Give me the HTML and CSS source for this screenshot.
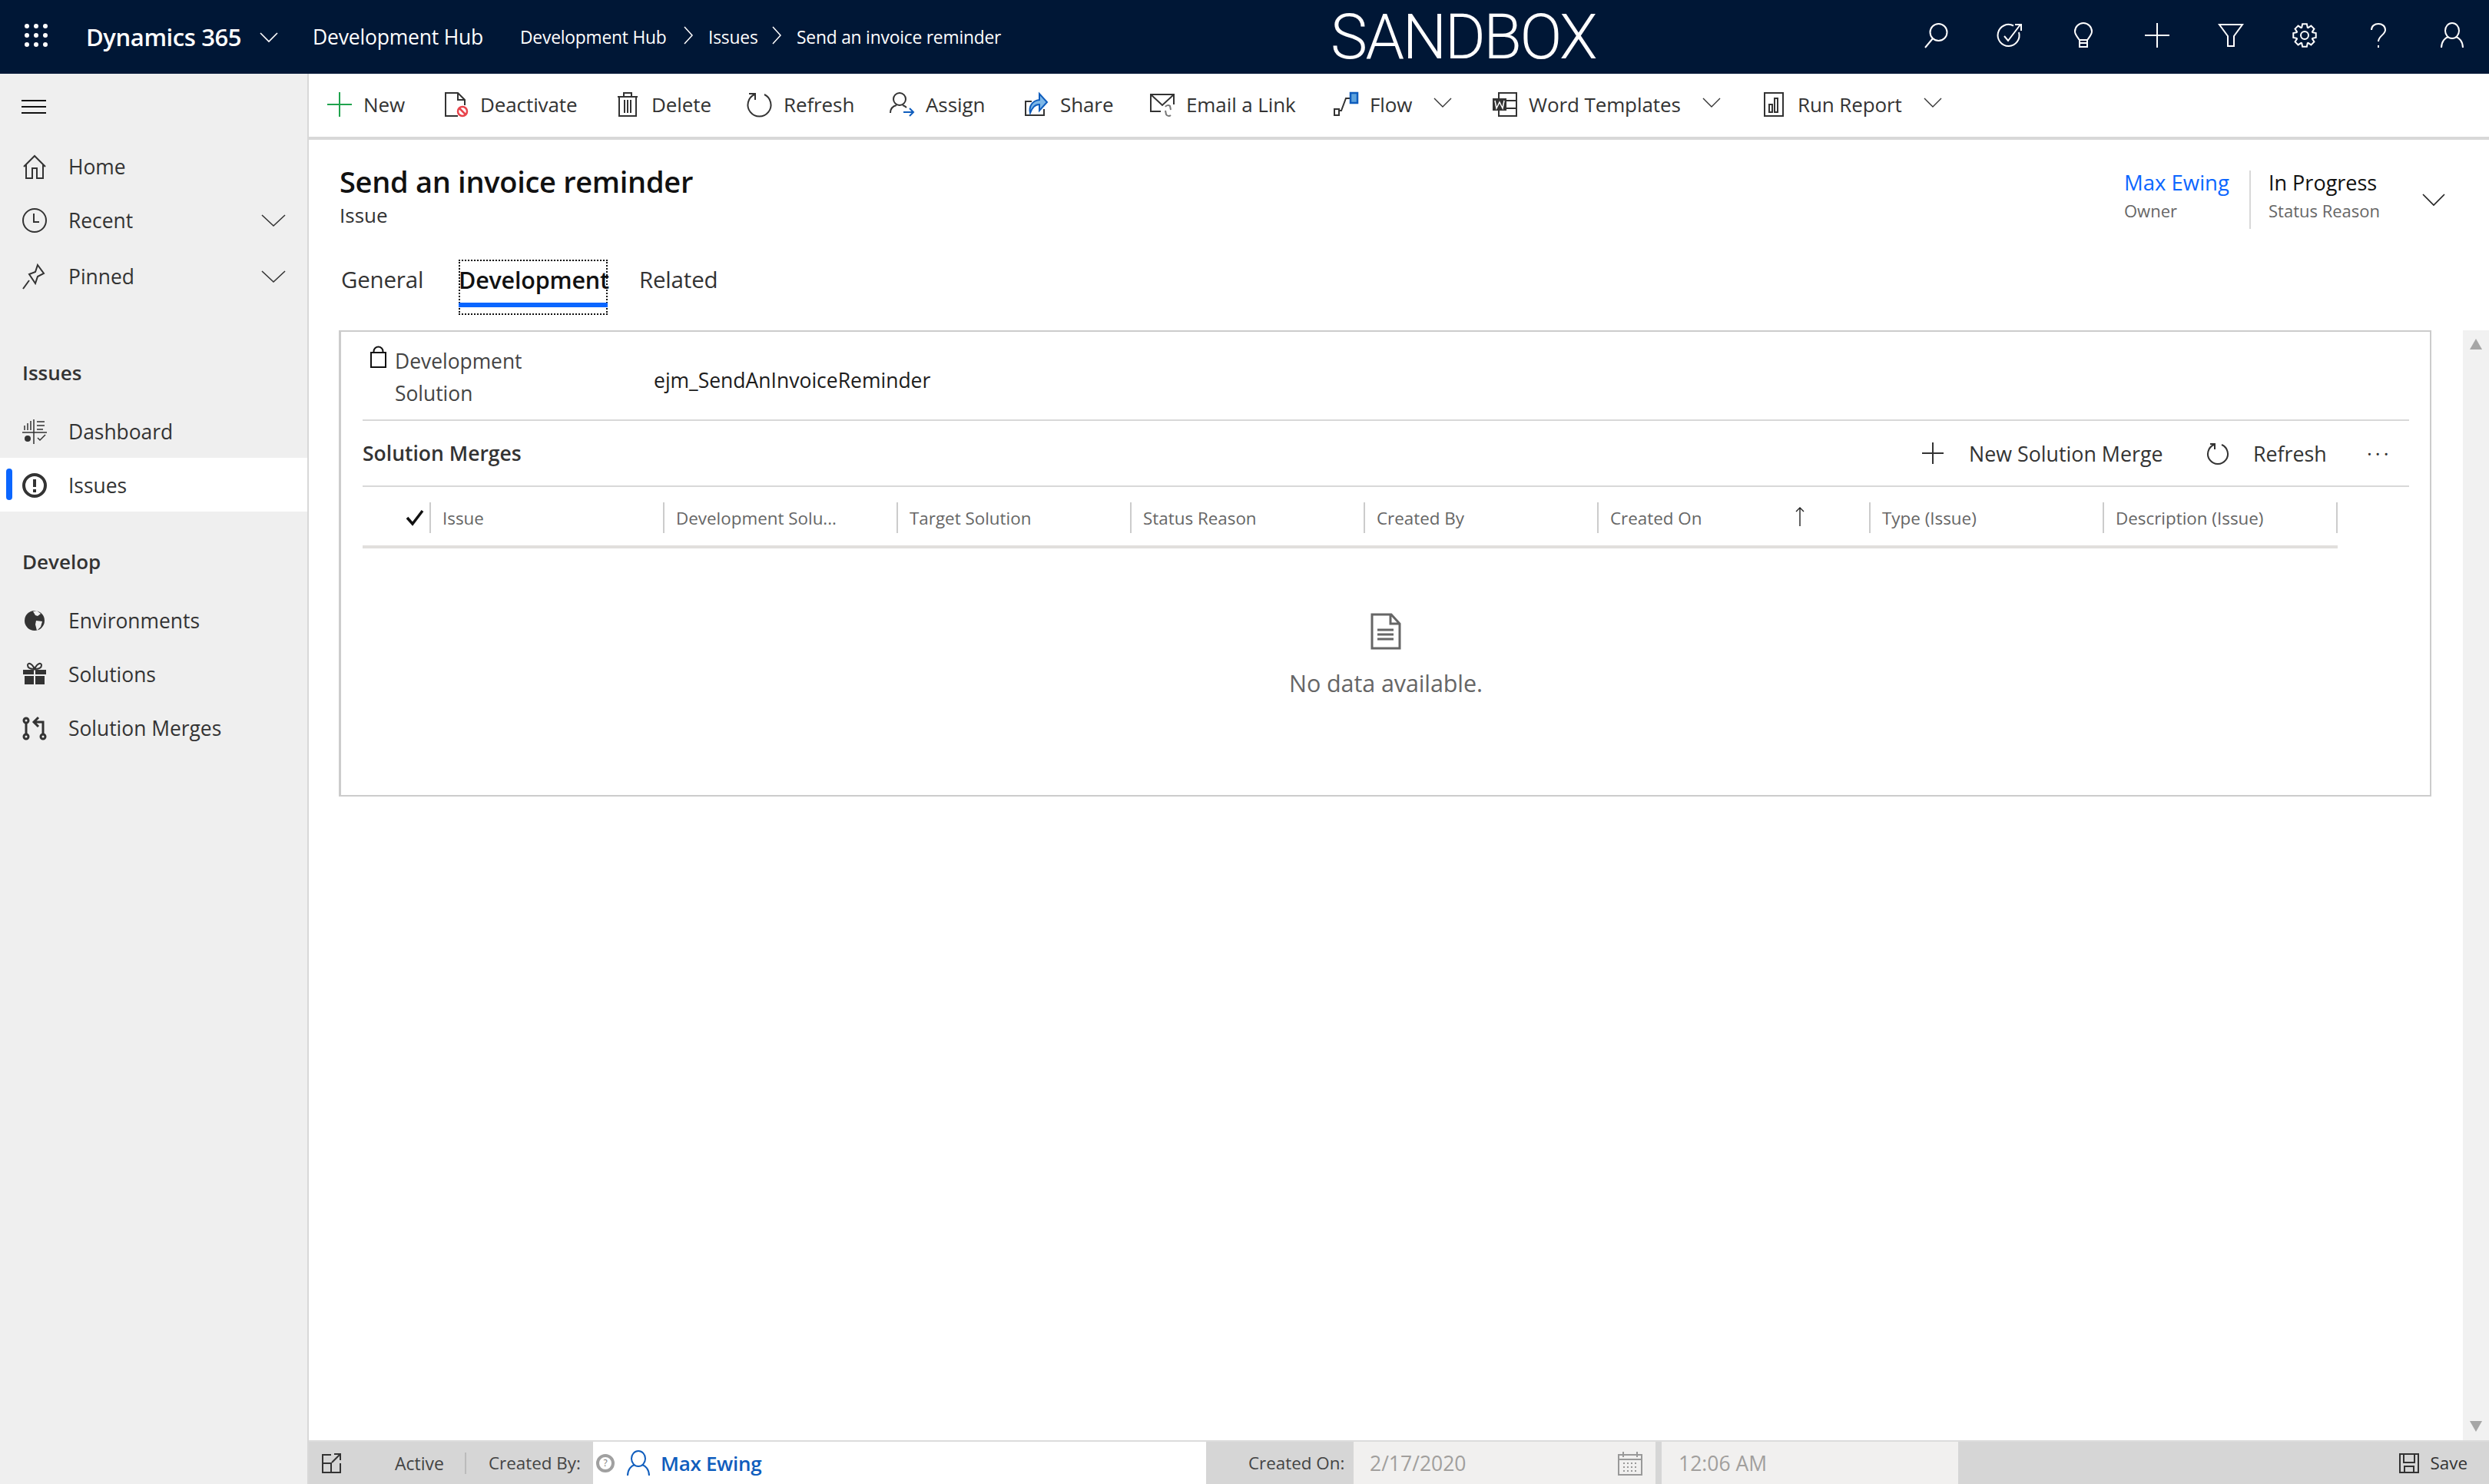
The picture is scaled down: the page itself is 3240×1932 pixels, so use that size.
FILE: index.html
```html
<!DOCTYPE html>
<html lang="en">
<head>
<meta charset="utf-8">
<title>Send an invoice reminder</title>
<link rel="stylesheet" href="styles.css">
</head>
<body>
<header class="topbar">
  <div class="topbar-left">
    <svg class="waffle" viewBox="0 0 30 30"><g class="solid"><circle cx="3" cy="3" r="3"/><circle cx="15" cy="3" r="3"/><circle cx="27" cy="3" r="3"/><circle cx="3" cy="15" r="3"/><circle cx="15" cy="15" r="3"/><circle cx="27" cy="15" r="3"/><circle cx="3" cy="27" r="3"/><circle cx="15" cy="27" r="3"/><circle cx="27" cy="27" r="3"/></g></svg>
    <span class="brand">Dynamics 365</span>
    <svg class="chev chev-top" viewBox="0 0 24 13"><path d="M1 1l11 11L23 1"/></svg>
    <span class="app-name">Development Hub</span>
    <span class="crumb crumb-hub">Development Hub</span>
    <svg class="crumb-sep" viewBox="0 0 12 24"><path d="M1 1l10 11L1 23"/></svg>
    <span class="crumb crumb-issues">Issues</span>
    <svg class="crumb-sep" viewBox="0 0 12 24"><path d="M1 1l10 11L1 23"/></svg>
    <span class="crumb">Send an invoice reminder</span>
  </div>
  <div class="sandbox">SANDBOX</div>
  <nav class="top-icons">
    <span class="top-icon"><svg class="ic32" viewBox="0 0 32 32"><circle cx="19.500" cy="12" r="11"/><path d="M12 20L2 32"/></svg></span>
    <span class="top-icon"><svg class="ic32" viewBox="0 0 32 32"><path d="M21 3.500A14 14 0 1 0 28 12"/><path d="M9 17l5 6L30 2M23 2h8v8"/></svg></span>
    <span class="top-icon"><svg class="ic32" viewBox="0 0 32 32"><path d="M11 22C8 18 5 15 5 11a11 11 0 0 1 22 0c0 4-3 7-6 11zM11 22v9h10v-9M11 26h10"/></svg></span>
    <span class="top-icon"><svg class="ic32" viewBox="0 0 32 32"><path d="M16 0v32M0 16h32"/></svg></span>
    <span class="top-icon"><svg class="ic32" viewBox="0 0 32 32"><path d="M1 2h30L20 17v13h-8V17z"/></svg></span>
    <span class="top-icon"><svg class="ic32" viewBox="-16 -16 32 32"><polygon points="-2.86,-14.72 2.86,-14.72 3.76,-10.34 4.65,-9.97 8.39,-12.44 12.44,-8.39 9.97,-4.65 10.34,-3.76 14.72,-2.86 14.72,2.86 10.34,3.76 9.97,4.65 12.44,8.39 8.39,12.44 4.65,9.97 3.76,10.34 2.86,14.72 -2.86,14.72 -3.76,10.34 -4.65,9.97 -8.39,12.44 -12.44,8.39 -9.97,4.65 -10.34,3.76 -14.72,2.86 -14.72,-2.86 -10.34,-3.76 -9.97,-4.65 -12.44,-8.39 -8.39,-12.44 -4.65,-9.97 -3.76,-10.34"/><circle r="5"/></svg></span>
    <span class="top-icon"><svg class="ic32" viewBox="0 0 32 32"><path d="M7 9c0-5 4-8 9-8s9 3 9 8c0 6-9 8-9 15"/><path d="M16 29v3"/></svg></span>
    <span class="top-icon"><svg class="ic32" viewBox="0 0 32 32"><ellipse cx="16" cy="10" rx="9" ry="10"/><path d="M2 32c0-8 5-13 9-14M30 32c0-8-5-13-9-14"/></svg></span>
  </nav>
</header>

<div class="shell">
  <aside class="sidebar">
    <div class="burger"><svg class="burger-ic" viewBox="0 0 32 18"><path d="M0 1h32M0 9h32M0 17h32"/></svg></div>
    <ul class="nav-list nav-top">
      <li class="nav-row"><svg class="ic-nav" viewBox="0 0 30 32"><path d="M1 16L15 2l14 14M4 13v18h8V18h6v13h8V13"/></svg><span>Home</span></li>
      <li class="nav-row"><svg class="ic-nav" viewBox="0 0 32 32"><circle cx="16" cy="16" r="15"/><path d="M15 7v11h7"/></svg><span>Recent</span><svg class="chev chev-nav" viewBox="0 0 32 16"><path d="M1 1l15 14L31 1"/></svg></li>
      <li class="nav-row"><svg class="ic-nav" viewBox="0 0 32 32"><path d="M20 1l8 11-8 4-3 9-8-12 8-3zM9 21L1 32"/></svg><span>Pinned</span><svg class="chev chev-nav" viewBox="0 0 32 16"><path d="M1 1l15 14L31 1"/></svg></li>
    </ul>
    <h2 class="nav-heading nav-heading-issues">Issues</h2>
    <ul class="nav-list nav-list-issues">
      <li class="nav-row"><svg class="ic-nav ic-thin" viewBox="0 0 32 32"><path d="M0 17h32M15 0v32M3 8v6M7 5v9M11 2v12M19 3h10M19 8h10M19 13h8M20 24l3 3 7-7"/><circle class="solid" cx="7" cy="25" r="4"/></svg><span>Dashboard</span></li>
      <li class="nav-row nav-row-active"><svg class="ic-nav ic-bold" viewBox="0 0 32 32"><circle cx="16" cy="16" r="14"/><path d="M16 8v10M16 21v4"/></svg><span>Issues</span></li>
    </ul>
    <h2 class="nav-heading nav-heading-develop">Develop</h2>
    <ul class="nav-list">
      <li class="nav-row"><svg class="ic-nav" viewBox="0 0 32 32"><circle class="solid" cx="16" cy="16" r="13"/><path class="cut" d="M14 4l5-1 5 4-4 3-3-1zM18 16l8 1-2 7-5 5-2-8z"/></svg><span>Environments</span></li>
      <li class="nav-row"><svg class="ic-nav" viewBox="0 0 32 32"><g class="solid"><path d="M1 10h14v6H1zM17 10h14v6H17zM3 18h12v11H3zM17 18h12v11H17z"/></g><path d="M16 9c-6 0-9-2-9-5s5-4 9 5c4-9 9-8 9-5s-3 5-9 5z"/></svg><span>Solutions</span></li>
      <li class="nav-row"><svg class="ic-nav ic-merge" viewBox="0 0 32 32"><circle cx="5" cy="6" r="3"/><circle cx="5" cy="27" r="3"/><circle cx="27" cy="27" r="3"/><path d="M5 9v15M27 24V8H16M21 2l-6 6 6 6"/></svg><span>Solution Merges</span></li>
    </ul>
  </aside>

  <main class="main">
    <div class="toolbar">
      <div class="tool tool-new"><svg class="ic32 ic-green" viewBox="0 0 32 32"><path d="M16 0v32M0 16h32"/></svg><span>New</span></div>
      <div class="tool tool-deactivate"><svg class="ic32" viewBox="0 0 32 32"><path d="M18 31H2V1h16l9 9v7M18 1v9h9"/><circle class="ic-red" cx="24" cy="25" r="6"/><path class="ic-red" d="M20 21l8 8"/></svg><span>Deactivate</span></div>
      <div class="tool tool-delete"><svg class="ic32" viewBox="0 0 28 32"><path d="M1 6h26M9 6V1h10v5M3 6v25h22V6M10 10v17M14 10v17M18 10v17"/></svg><span>Delete</span></div>
      <div class="tool tool-refresh"><svg class="ic32" viewBox="0 0 32 32"><path d="M9 3a15 15 0 1 0 13 0M2 2h8v8"/></svg><span>Refresh</span></div>
      <div class="tool tool-assign"><svg class="ic32" viewBox="0 0 32 32"><ellipse cx="13" cy="9" rx="8" ry="8"/><path d="M1 27c0-6 4-9 8-10M17 17c2 .5 4 2 5 3"/><path class="ic-blue" d="M18 26h13M26 21l5 5-5 5"/></svg><span>Assign</span></div>
      <div class="tool tool-share"><svg class="ic32" viewBox="0 0 32 32"><path d="M10 12H2v18h24v-8"/><path class="ic-share" d="M8 27c-2-9 3-16 12-17V2l10 11-10 11v-8c-6 0-9 4-12 11z"/></svg><span>Share</span></div>
      <div class="tool tool-email"><svg class="ic32" viewBox="0 0 32 32"><path d="M14 25H1V3h30v13M1 3l15 14L31 3"/><path class="ic-gray" d="M20 19a4 4 0 0 1 6-1l1 5M27 30a4 4 0 0 1-6-1l-1-5"/></svg><span>Email a Link</span></div>
      <div class="tool tool-flow"><svg class="ic32" viewBox="0 0 32 32"><path d="M1 22h6v8H1zM7 24h3l6-16h7"/><rect class="ic-fill-blue" x="22" y="1" width="9" height="13"/></svg><span>Flow</span><svg class="chev chev-tool" viewBox="0 0 24 13"><path d="M1 1l11 11L23 1"/></svg></div>
      <div class="tool tool-word"><svg class="ic32" viewBox="0 0 32 32"><path d="M8 1h23v30H8zM8 11h23M8 21h23"/><rect class="solid" x="0" y="8" width="18" height="16"/><path class="cut-line" d="M3 11l2 10 4-8 4 8 2-10"/></svg><span>Word Templates</span><svg class="chev chev-tool" viewBox="0 0 24 13"><path d="M1 1l11 11L23 1"/></svg></div>
      <div class="tool tool-report"><svg class="ic-report" viewBox="0 0 28 32"><path d="M2 1h24v30H2zM8 16h4v10H8zM15 8h4v18h-4z"/></svg><span>Run Report</span><svg class="chev chev-tool" viewBox="0 0 24 13"><path d="M1 1l11 11L23 1"/></svg></div>
    </div>

    <section class="record-head">
      <div class="record-title-row">
        <div>
          <h1 class="record-title">Send an invoice reminder</h1>
          <div class="record-type">Issue</div>
        </div>
        <div class="record-meta">
          <div class="meta-owner"><div class="meta-link">Max Ewing</div><div class="meta-label">Owner</div></div>
          <div class="meta-status"><div class="meta-value">In Progress</div><div class="meta-label">Status Reason</div></div>
          <svg class="chev chev-meta" viewBox="0 0 30 16"><path d="M1 1l14 14L29 1"/></svg>
        </div>
      </div>
      <div class="tabs">
        <span class="tab tab-general">General</span>
        <span class="tab tab-active">Development</span>
        <span class="tab">Related</span>
      </div>
    </section>

    <div class="pane">
      <div class="pane-body">
        <section class="card">
          <div class="field-row">
            <div class="field-label">
              <svg class="lock" viewBox="0 0 21 28"><path d="M1 8h19v19H1zM4.500 8V6.500a6 6 0 0 1 12 0V8"/></svg>
              <span class="field-label-text">Development Solution</span>
            </div>
            <div class="field-value">ejm_SendAnInvoiceReminder</div>
          </div>
          <div class="grid-bar">
            <h2 class="grid-title">Solution Merges</h2>
            <div class="grid-actions">
              <div class="grid-action grid-action-new"><svg class="ic28" viewBox="0 0 28 28"><path d="M14 0v28M0 14h28"/></svg><span>New Solution Merge</span></div>
              <div class="grid-action grid-action-refresh"><svg class="ic28" viewBox="0 0 28 28"><path d="M9 3a13 13 0 1 0 10 0M4 2h6v7"/></svg><span>Refresh</span></div>
              <div class="grid-more">···</div>
            </div>
          </div>
          <div class="grid-head">
            <div class="col col-check"><svg class="check" viewBox="0 0 22 20"><path d="M1 10l7 8L21 1"/></svg></div>
            <div class="col">Issue</div>
            <div class="col">Development Solu...</div>
            <div class="col">Target Solution</div>
            <div class="col">Status Reason</div>
            <div class="col">Created By</div>
            <div class="col col-sorted">Created On<svg class="sort" viewBox="0 0 12 25"><path d="M6 25V1M1 6l5-5 5 5"/></svg></div>
            <div class="col">Type (Issue)</div>
            <div class="col">Description (Issue)</div>
          </div>
          <div class="empty">
            <svg class="empty-ic" viewBox="0 0 40 48"><path d="M2 2h25l11 12v32H2zM26 2v12h12M9 22h21M9 28h21M9 34h21"/></svg>
            <div class="empty-text">No data available.</div>
          </div>
        </section>
      </div>
      <div class="scrollbar">
        <svg class="arrow" viewBox="0 0 16 14"><path d="M8 0l8 14H0z"/></svg>
        <svg class="arrow" viewBox="0 0 16 14"><path d="M0 0h16L8 14z"/></svg>
      </div>
    </div>

    <footer class="statusbar">
      <svg class="ic-expand" viewBox="0 0 26 26"><path d="M13 2H2v23h23V13M2 13h11v12M14 12L25 1M17 1h8v8"/></svg>
      <span class="status-active">Active</span>
      <span class="status-label status-created">Created By:</span>
      <div class="lookup">
        <span class="presence">?</span>
        <svg class="ic-user" viewBox="0 0 30 32"><ellipse cx="15" cy="10" rx="9" ry="10"/><path d="M1 32c0-8 5-13 9-14M29 32c0-8-5-13-9-14"/></svg>
        <span class="lookup-name">Max Ewing</span>
      </div>
      <span class="status-label status-on">Created On:</span>
      <div class="input input-date"><span>2/17/2020</span>
        <svg class="ic-cal" viewBox="0 0 32 32"><path d="M1 5h30v26H1zM1 11h30M7 1v7M25 1v7M7 16h2M12 16h2M17 16h2M22 16h2M7 21h2M12 21h2M17 21h2M22 21h2M7 26h2M12 26h2M17 26h2M22 26h2"/></svg>
      </div>
      <div class="input input-time"><span>12:06 AM</span></div>
      <div class="save"><svg class="ic-save" viewBox="0 0 26 26"><path d="M1 1h24v24H1zM6 1v11h14V1M7 25v-8h12v8"/></svg><span>Save</span></div>
    </footer>
  </main>
</div>
</body>
</html>
```

FILE: styles.css
```css
* { box-sizing: border-box; }
html, body { margin: 0; height: 100%; }
body {
  display: flex;
  flex-direction: column;
  width: 3240px;
  height: 1932px;
  overflow: hidden;
  font-family: "Open Sans", "Liberation Sans", sans-serif;
  font-size: 26px;
  color: #333;
  background: #fff;
}
h1, h2, ul { margin: 0; padding: 0; list-style: none; font: inherit; }
svg { display: block; flex: none; fill: none; stroke: currentColor; stroke-width: 2; overflow: visible; }
.solid { fill: currentColor; stroke: none; }
.ic32 { width: 32px; height: 32px; }
.ic28 { width: 28px; height: 28px; }

/* top bar */
.topbar {
  flex: none;
  display: flex;
  align-items: center;
  height: 96px;
  background: #001736;
  color: #fff;
}
.topbar-left { display: flex; align-items: center; width: 1732px; padding-left: 32px; white-space: nowrap; }
.waffle { width: 30px; height: 30px; margin-top: -4px; margin-right: 50px; }
.brand { width: 226px; font-size: 31px; font-weight: 600; letter-spacing: -.4px; }
.chev { stroke-width: 1.6px; }
.chev-top { width: 24px; height: 13px; margin-right: 45px; }
.app-name { width: 270px; font-size: 26.500px; letter-spacing: -.2px; }
.crumb { font-size: 22.800px; letter-spacing: -.2px; }
.crumb-hub { width: 213px; }
.crumb-issues { width: 83px; }
.crumb-sep { width: 12px; height: 24px; margin-right: 20px; margin-top: -4px; stroke-width: 1.5px; }
.sandbox { margin-top: 2px; font-family: Roboto, "Open Sans", sans-serif; font-size: 81px; font-weight: 300; line-height: 96px; letter-spacing: -2.500px; }
.top-icons { display: flex; margin-left: auto; margin-top: -4px; }
.top-icon { display: flex; justify-content: center; width: 96px; }

/* shell */
.shell { flex: 1; display: flex; min-height: 0; }
.sidebar { flex: none; width: 402px; background: #efefef; border-right: 2px solid #d8d8d8; }
.burger { display: flex; align-items: center; height: 84px; padding: 0 0 0 28px; margin-bottom: 2px; }
.burger-ic { width: 32px; height: 18px; margin-top: 2px; color: #111; }
.nav-top .nav-row:last-child { margin-top: 3px; }
.nav-row { position: relative; display: flex; align-items: center; height: 70px; padding-left: 29px; font-size: 26.400px; color: #333; }
.nav-row > span { margin-left: 28px; }
.nav-list-issues .nav-row { padding-top: 2px; }
.ic-nav { width: 32px; height: 32px; color: #333; }
.ic-thin { stroke-width: 1.5px; }
.ic-bold { stroke-width: 4px; }
.ic-merge { stroke-width: 3px; }
.cut { fill: #efefef; stroke: none; }
.chev-nav { position: absolute; right: 28px; top: 27px; width: 32px; height: 16px; }
.nav-row-active { background: #fff; }
.nav-row-active::before {
  content: "";
  position: absolute;
  left: 8px;
  top: 14px;
  width: 8px;
  height: 41px;
  border-radius: 4px;
  background: #0b66ff;
}
.nav-heading { display: flex; align-items: center; height: 70px; padding-left: 29px; font-weight: 600; color: #333; }
.nav-heading-issues { margin-top: 55px; margin-bottom: 6px; }
.nav-heading-develop { margin-top: 30px; margin-bottom: 7px; }

/* main */
.main { flex: 1; min-width: 0; display: flex; flex-direction: column; }
.toolbar {
  flex: none;
  display: grid;
  grid-template-columns: 152px 223px 172px 185px 175px 164px 239px 207px 352px 1fr;
  align-items: center;
  height: 86px;
  padding: 0 0 2px 24px;
  border-bottom: 4px solid #d8d8d8;
}
.tool { display: flex; align-items: center; white-space: nowrap; }
.tool > span { margin-left: 15px; letter-spacing: -.1px; }
.ic-green { color: #1fa34d; }
.ic-red { stroke: #e8434b; stroke-width: 2.500px; }
.ic-blue { stroke: #0f5dbd; }
.ic-gray { stroke: #777; }
.ic-share { fill: #7db7e8; stroke: #0f5dbd; }
.ic-fill-blue { fill: #5ea3de; stroke: #0f5dbd; stroke-width: 2.500px; }
.cut-line { stroke: #fff; stroke-width: 1.500px; }
.ic-report { width: 28px; height: 32px; }
.tool-report > span { margin-left: 17px; }
.chev-tool { width: 24px; height: 13px; margin-left: 28px; stroke-width: 1.4px; margin-top: -6px; }

.record-head { flex: none; height: 248px; padding: 27px 57px 0 40px; }
.record-title-row { display: flex; justify-content: space-between; }
.record-title { font-size: 38px; line-height: 54px; font-weight: 600; color: #111; letter-spacing: -.3px; }
.record-type { margin-top: 2px; font-size: 26px; line-height: 30px; color: #333; }
.record-meta { display: flex; align-items: flex-start; margin-top: 13px; }
.meta-owner { width: 163px; height: 76px; }
.meta-status { width: 225px; height: 76px; padding-left: 23px; border-left: 2px solid #d8d8d8; }
.meta-link, .meta-value { margin-top: -2px; line-height: 36px; white-space: nowrap; }
.meta-link { font-size: 27.500px; color: #0b66ff; }
.meta-value { font-size: 27px; color: #111; }
.meta-label { font-size: 22px; line-height: 36px; color: #666; white-space: nowrap; }
.chev-meta { width: 30px; height: 16px; margin-top: 30px; color: #222; }

.tabs { display: flex; margin-top: 40px; margin-left: 2px; }
.tab { display: block; height: 72px; font-size: 29.500px; line-height: 52px; color: #333; white-space: nowrap; letter-spacing: -.2px; }
.tab-general { width: 153px; }
.tab-active {
  position: relative;
  width: 194px;
  margin-right: 41px;
  font-size: 30.500px;
  font-weight: 600;
  color: #111;
  outline: 2px dotted #111;
  outline-offset: -2px;
  letter-spacing: -.2px;
}
.tab-active::after {
  content: "";
  position: absolute;
  left: 0;
  right: 0;
  bottom: 10px;
  height: 6px;
  background: #0b66ff;
}

.pane { flex: 1; display: flex; min-height: 0; }
.pane-body { flex: 1; padding: 0 41px 0 39px; }
.card {
  height: 607px;
  padding: 0 27px 0 28px;
  border: 2px solid #ccc;
  border-left-width: 3px;
}
.field-row {
  display: flex;
  align-items: center;
  height: 116px;
  border-bottom: 2px solid #d8d8d8;
}
.field-label { display: flex; align-items: flex-start; width: 379px; padding-left: 10px; margin-top: 4px; }
.lock { width: 21px; height: 28px; margin-top: 2px; color: #111; }
.field-label-text { width: 190px; margin-left: 11px; line-height: 42px; font-size: 26.400px; color: #444; }
.field-value { margin-top: 12px; font-size: 26.500px; color: #1c1c1c; }
.grid-bar {
  display: flex;
  align-items: center;
  height: 86px;
  border-bottom: 2px solid #d8d8d8;
}
.grid-title { font-size: 26.500px; font-weight: 600; color: #333; }
.grid-actions { display: flex; align-items: center; margin-left: auto; padding-right: 28px; white-space: nowrap; }
.grid-action { display: flex; align-items: center; font-size: 26.800px; }
.grid-action-new { width: 371px; }
.grid-action-refresh { width: 208px; }
.grid-action > span { margin-left: 33px; }
.grid-action-refresh > span { margin-left: 32px; }
.grid-more { width: 27px; font-size: 26px; line-height: 20px; letter-spacing: 4px; text-align: center; }

.grid-head {
  display: grid;
  grid-template-columns: 89px repeat(5, 304px) 354px 304px 304px;
  width: 2571px;
  padding: 20px 0 16px;
  border-bottom: 4px solid #e1dfdd;
  box-sizing: content-box;
  height: 40px;
}
.col {
  display: flex;
  align-items: center;
  height: 40px;
  padding-left: 15px;
  font-size: 22.400px;
  color: #666;
  border-right: 2px solid #ccc;
  white-space: nowrap;
}
.col-check { justify-content: flex-end; padding: 0 8px 0 0; }
.check { width: 22px; height: 20px; color: #111; stroke-width: 3.500px; }
.col-sorted { position: relative; }
.sort { position: absolute; right: 84px; top: 6px; width: 12px; height: 25px; color: #222; stroke-width: 1.400px; }

.empty { display: flex; flex-direction: column; align-items: center; padding-top: 84px; color: #666; }
.empty-ic { width: 40px; height: 48px; stroke-width: 3px; }
.empty-text { margin-top: 24px; font-size: 30.500px; line-height: 38px; letter-spacing: -.1px; }

.scrollbar {
  flex: none;
  display: flex;
  flex-direction: column;
  justify-content: space-between;
  align-items: center;
  width: 34px;
  padding: 11px 0;
  background: #f1f1f1;
}
.arrow { width: 16px; height: 14px; fill: #a6a6a6; stroke: none; }

/* status bar */
.statusbar {
  flex: none;
  display: flex;
  align-items: center;
  height: 57px;
  background: #d6d6d6;
  border-top: 2px solid #dcdcdc;
  font-size: 22.400px;
  color: #444;
  white-space: nowrap;
}
.ic-expand { width: 26px; height: 26px; margin-left: 16px; color: #333; }
.status-active { width: 93px; margin-left: 70px; border-right: 2px solid #bbb; font-size: 23px; line-height: 28px; }
.status-created { width: 165px; padding-left: 29px; }
.lookup {
  display: flex;
  align-items: center;
  align-self: stretch;
  width: 798px;
  padding-left: 4px;
  background: #fff;
}
.presence {
  width: 24px;
  height: 24px;
  border: 4px solid #a0a0a0;
  border-radius: 50%;
  font-size: 12px;
  line-height: 16px;
  text-align: center;
  color: #777;
}
.ic-user { width: 30px; height: 32px; margin-left: 16px; color: #0f5dbd; }
.lookup-name { margin-left: 14px; font-size: 26px; font-weight: 600; color: #0f5dbd; letter-spacing: -.3px; }
.status-on { width: 192px; padding-left: 55px; }
.input {
  display: flex;
  align-items: center;
  align-self: stretch;
  background: #f1f0ef;
  font-size: 26.500px;
  color: #a19f9d;
}
.input-date { justify-content: space-between; width: 393px; padding: 0 17px 0 21px; margin-right: 8px; }
.input-time { width: 386px; padding-left: 22px; }
.ic-cal { width: 32px; height: 32px; color: #999; stroke-width: 2px; }
.save { display: flex; align-items: center; margin-left: auto; padding-right: 28px; color: #333; }
.save > span { margin-left: 15px; }
.ic-save { width: 26px; height: 26px; color: #333; }
```
